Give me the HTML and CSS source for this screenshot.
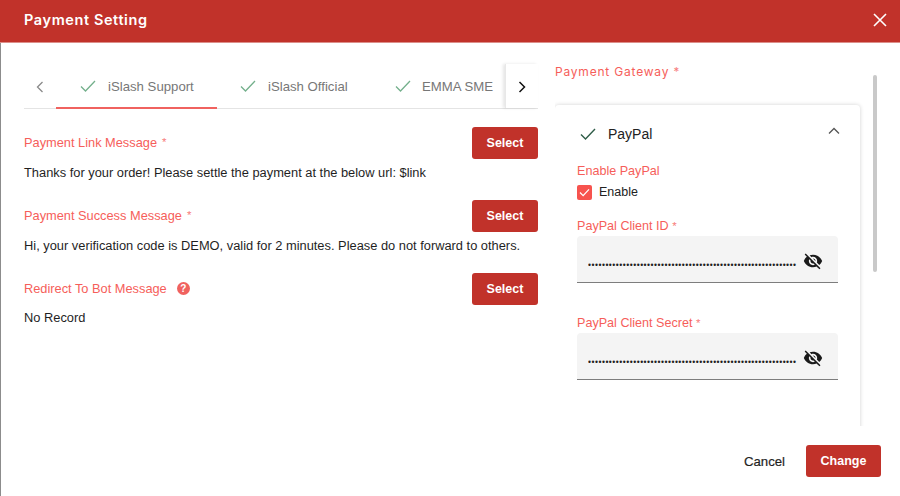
FILE: index.html
```html
<!DOCTYPE html>
<html lang="en">
<head>
<meta charset="utf-8">
<title>Payment Setting</title>
<link rel="stylesheet" href="styles.css">
</head>
<body>
<div class="modal">
  <header class="modal-head">
    <h1 class="modal-title">Payment Setting</h1>
    <svg class="close" viewBox="0 0 14 14" width="14" height="14"><path d="M1 1l12 12M13 1L1 13" fill="none" stroke="#fff" stroke-width="1.6"/></svg>
  </header>
  <main class="modal-body">
    <section class="left">
      <div class="tabs">
        <div class="tab-arrow prev"><svg viewBox="0 0 8 12" width="8" height="12"><path d="M6.5 1L1.5 6l5 5" fill="none" stroke="#8a8a8a" stroke-width="1.3"/></svg></div>
        <div class="tab tab-active">
          <svg class="tab-check" viewBox="0 0 16 14" width="16" height="14"><path d="M1 7.5l4.5 4.500L15 2" fill="none" stroke="#74b08c" stroke-width="1.3"/></svg>
          <span>iSlash Support</span>
        </div>
        <div class="tab tab-second">
          <svg class="tab-check" viewBox="0 0 16 14" width="16" height="14"><path d="M1 7.5l4.5 4.500L15 2" fill="none" stroke="#74b08c" stroke-width="1.3"/></svg>
          <span>iSlash Official</span>
        </div>
        <div class="tab tab-third">
          <svg class="tab-check" viewBox="0 0 16 14" width="16" height="14"><path d="M1 7.5l4.5 4.500L15 2" fill="none" stroke="#74b08c" stroke-width="1.3"/></svg>
          <span>EMMA SME</span>
        </div>
        <div class="tab-arrow next"><svg viewBox="0 0 8 12" width="8" height="12"><path d="M1.5 1l5 5-5 5" fill="none" stroke="#111" stroke-width="1.5"/></svg></div>
      </div>
      <div class="msg">
        <div class="msg-head">
          <span class="label">Payment Link Message <i class="req">*</i></span>
          <button class="btn">Select</button>
        </div>
        <p class="msg-text">Thanks for your order! Please settle the payment at the below url: $link</p>
      </div>
      <div class="msg">
        <div class="msg-head">
          <span class="label">Payment Success Message <i class="req">*</i></span>
          <button class="btn">Select</button>
        </div>
        <p class="msg-text">Hi, your verification code is DEMO, valid for 2 minutes. Please do not forward to others.</p>
      </div>
      <div class="msg">
        <div class="msg-head">
          <span class="label">Redirect To Bot Message <span class="help">?</span></span>
          <button class="btn">Select</button>
        </div>
        <p class="msg-text msg-text-last">No Record</p>
      </div>
    </section>
    <section class="right">
      <div class="gateway-label">Payment Gateway <i class="req">*</i></div>
      <div class="card">
        <div class="card-head">
          <svg viewBox="0 0 16 14" width="16" height="14"><path d="M1 7.5l4.5 4.500L15 2" fill="none" stroke="#2f5d48" stroke-width="1.4"/></svg>
          <span class="card-name">PayPal</span>
          <svg class="chev" viewBox="0 0 12 8" width="12" height="8"><path d="M1 6.500l5-5 5 5" fill="none" stroke="#555" stroke-width="1.3"/></svg>
        </div>
        <div class="field-label">Enable PayPal</div>
        <label class="enable">
          <span class="checkbox"><svg viewBox="0 0 12 10" width="11" height="9"><path d="M1 5l3.500 3.500L11 1.500" fill="none" stroke="#fff" stroke-width="1.4"/></svg></span>
          Enable
        </label>
        <div class="field-label id-label">PayPal Client ID <i class="req">*</i></div>
        <div class="input-box">
          <input class="secret" type="password" value="............................................................" readonly>
          <svg class="eye" viewBox="0 0 24 24" width="20" height="20"><path fill="#1a1a1a" d="M12 7c2.76 0 5 2.24 5 5 0 .65-.13 1.26-.36 1.83l2.92 2.92c1.51-1.26 2.7-2.89 3.43-4.75-1.73-4.39-6-7.5-11-7.5-1.4 0-2.74.25-3.98.7l2.16 2.16C10.74 7.13 11.35 7 12 7zM2 4.27l2.28 2.28.46.46C3.08 8.3 1.78 10.02 1 12c1.73 4.39 6 7.5 11 7.5 1.55 0 3.03-.3 4.38-.84l.42.42L19.73 22 21 20.73 3.27 3 2 4.27zM7.53 9.8l1.55 1.55c-.05.21-.08.43-.08.65 0 1.66 1.34 3 3 3 .22 0 .44-.03.65-.08l1.55 1.55c-.67.33-1.41.53-2.2.53-2.76 0-5-2.24-5-5 0-.79.2-1.53.53-2.2zm4.31-.78l3.15 3.15.02-.16c0-1.66-1.34-3-3-3l-.17.01z"/></svg>
        </div>
        <div class="field-label secret-label">PayPal Client Secret <i class="req">*</i></div>
        <div class="input-box">
          <input class="secret" type="password" value="............................................................" readonly>
          <svg class="eye" viewBox="0 0 24 24" width="20" height="20"><path fill="#1a1a1a" d="M12 7c2.76 0 5 2.24 5 5 0 .65-.13 1.26-.36 1.83l2.92 2.92c1.51-1.26 2.7-2.89 3.43-4.75-1.73-4.39-6-7.5-11-7.5-1.4 0-2.74.25-3.98.7l2.16 2.16C10.74 7.13 11.35 7 12 7zM2 4.27l2.28 2.28.46.46C3.08 8.3 1.78 10.02 1 12c1.73 4.39 6 7.5 11 7.5 1.55 0 3.03-.3 4.38-.84l.42.42L19.73 22 21 20.73 3.27 3 2 4.27zM7.53 9.8l1.55 1.55c-.05.21-.08.43-.08.65 0 1.66 1.34 3 3 3 .22 0 .44-.03.65-.08l1.55 1.55c-.67.33-1.41.53-2.2.53-2.76 0-5-2.24-5-5 0-.79.2-1.53.53-2.2zm4.31-.78l3.15 3.15.02-.16c0-1.66-1.34-3-3-3l-.17.01z"/></svg>
        </div>
      </div>
      <div class="scroll-thumb"></div>
    </section>
  </main>
  <footer class="modal-foot">
    <button class="btn-text">Cancel</button>
    <button class="btn btn-change">Change</button>
  </footer>
</div>
</body>
</html>
```

FILE: styles.css
```css
* { box-sizing: border-box; }
html, body { margin: 0; padding: 0; }
body {
  width: 900px;
  height: 496px;
  overflow: hidden;
  background: #fff;
  font-family: "Liberation Sans", Arial, sans-serif;
  color: #1f1f1f;
}
.modal {
  height: 496px;
  display: flex;
  flex-direction: column;
  border-left: 1px solid #8c8c8c;
}
.modal-head {
  height: 43px;
  flex: none;
  margin-left: -1px;
  background: #c1322a;
  border-bottom: 1px solid #dc8f8a;
  display: flex;
  align-items: center;
  justify-content: space-between;
  padding: 0 13px 3px 24px;
}
.modal-title {
  margin: 0;
  font-family: Inter, sans-serif;
  font-weight: 600;
  font-size: 14.5px;
  letter-spacing: .6px;
  color: #fff;
}
.modal-body {
  height: 383px;
  flex: none;
  display: flex;
  padding-left: 23px;
  position: relative;
}
.left {
  width: 514px;
  flex: none;
  padding-top: 21px;
}
.tabs {
  height: 45px;
  display: flex;
  border-bottom: 1px solid #e4e4e4;
  font-size: 13.2px;
  color: #777;
}
.tab-arrow {
  display: flex;
  align-items: center;
  justify-content: center;
  flex: none;
}
.prev { width: 32px; padding-top: 2px; }
.next {
  width: 33px;
  margin-left: auto;
  padding-top: 2px;
  border-left: 1px solid #e8e8e8;
  box-shadow: -2px 0 3px rgba(0,0,0,.1);
}
.tab {
  display: flex;
  align-items: center;
  gap: 12px;
  height: 45px;
  padding-top: 1px;
  border-bottom: 2px solid transparent;
}
.tab-check { flex: none; }
.tab-active {
  width: 161px;
  padding-left: 24px;
  border-bottom-color: #f0625f;
}
.tab-second {
  width: 155px;
  padding-left: 23px;
}
.tab-third {
  padding-left: 23px;
  gap: 11px;
  width: 132px;
}
.msg { margin-top: 18px; }
.msg + .msg { margin-top: 0; }
.msg-head {
  height: 32px;
  display: flex;
  align-items: center;
  justify-content: space-between;
}
.label {
  font-size: 12.8px;
  padding-bottom: 2px;
  color: #f65e5a;
  display: flex;
  align-items: center;
  gap: 5px;
}
.req {
  font-style: normal;
  font-size: 11.5px;
  color: #f77d7a;
}
.help {
  width: 13px;
  height: 13px;
  margin-left: 5px;
  border-radius: 50%;
  background: #f0625f;
  color: #fff;
  font: 700 10px/13px "Liberation Sans", sans-serif;
  text-align: center;
}
.btn {
  width: 66px;
  height: 32px;
  padding: 0;
  border: 0;
  border-radius: 3px;
  background: #c1322a;
  color: #fff;
  font-family: "Liberation Sans", sans-serif;
  font-weight: 700;
  font-size: 12.5px;
}
.msg-text {
  margin: 6px 0 0;
  height: 35px;
  font-size: 12.85px;
  line-height: 15px;
  color: #1f1f1f;
}
.msg-text-last { margin-top: 5px; }
.right {
  flex: none;
  width: 362px;
  margin-left: 17px;
  position: relative;
  overflow: hidden;
}
.gateway-label {
  margin-top: 21px;
  height: 16px;
  font-family: Inter, sans-serif;
  font-size: 12px;
  letter-spacing: .8px;
  color: #f65e5a;
}
.card {
  margin-top: 25px;
  width: 305px;
  height: 340px;
  padding: 0 22px;
  border-radius: 4px;
  background: #fff;
  box-shadow: 0 0 4px rgba(0,0,0,.18);
}
.card-head {
  height: 58px;
  display: flex;
  align-items: center;
  gap: 12px;
  padding-left: 3px;
}
.card-name {
  font-size: 14px;
  color: #222;
}
.chev { margin-left: auto; margin-right: -2px; margin-top: -7px; }
.field-label {
  font-size: 12.6px;
  line-height: 16px;
  color: #f65e5a;
}
.enable {
  display: flex;
  align-items: center;
  gap: 7px;
  height: 16px;
  margin-top: 5px;
  font-size: 12.5px;
  color: #222;
}
.checkbox {
  width: 15px;
  height: 15px;
  border-radius: 2px;
  background: #f7534e;
  display: flex;
  align-items: center;
  justify-content: center;
}
.id-label { margin-top: 18px; }
.secret-label { margin-top: 32px; }
.input-box {
  height: 47px;
  margin-top: 2px;
  background: #f4f4f4;
  border-bottom: 1px solid #7d7d7d;
  border-radius: 4px 4px 0 0;
  display: flex;
  align-items: center;
  padding: 11px 15px 0 11px;
}
.secret {
  flex: 1;
  min-width: 0;
  width: 208px;
  border: 0;
  padding: 0;
  outline: 0;
  background: transparent;
  font-family: "Liberation Sans", sans-serif;
  font-size: 8.5px;
  letter-spacing: .5px;
  color: #1f1f1f;
}
.eye { flex: none; margin-left: 6px; margin-top: -7px; }
.scroll-thumb {
  position: absolute;
  left: 318px;
  top: 32px;
  width: 4px;
  height: 197px;
  border-radius: 2px;
  background: #c9c9c9;
}
.modal-foot {
  flex: 1;
  display: flex;
  align-items: flex-start;
  justify-content: flex-end;
  gap: 21px;
  padding: 19px 19px 0 0;
}
.btn-text {
  height: 32px;
  padding: 0;
  border: 0;
  background: none;
  font-family: "Liberation Sans", sans-serif;
  font-weight: 400;
  font-size: 13.2px;
  -webkit-text-stroke: .2px #1f1f1f;
  color: #1f1f1f;
}
.btn-change { width: 75px; }
```
